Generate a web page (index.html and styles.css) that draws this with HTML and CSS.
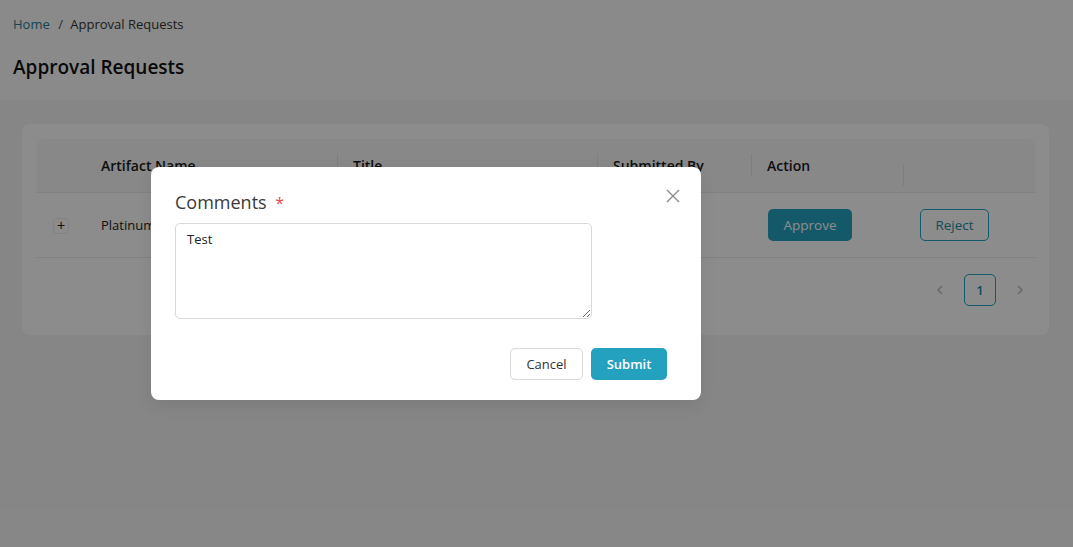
FILE: index.html
```html
<!DOCTYPE html>
<html lang="en">
<head>
  <meta charset="UTF-8">
  <meta name="viewport" content="width=device-width, initial-scale=1.0">
  <title>Approval Requests</title>
  <link rel="stylesheet" href="styles.css">
</head>
<body>
  <div class="hlavicka">
    <div class="drobky">
      <a class="drobek-odkaz" href="#">Home</a>
      <span class="oddelovac">/</span>
      <span class="drobek">Approval Requests</span>
    </div>
    <h1 class="nadpis">Approval Requests</h1>
  </div>

  <div class="obsah">
    <div class="karta">
      <div class="tabulka">
        <div class="radek radek-hlava">
          <div class="bunka bunka-plus"></div>
          <div class="bunka bunka-nazev">Artifact Name</div>
          <div class="bunka bunka-titul">Title</div>
          <div class="bunka bunka-autor">Submitted By</div>
          <div class="bunka bunka-akce">Action</div>
          <div class="bunka bunka-posledni"></div>
        </div>
        <div class="radek">
          <div class="bunka bunka-plus"><button class="rozbalit">+</button></div>
          <div class="bunka bunka-nazev">Platinum</div>
          <div class="bunka bunka-titul"></div>
          <div class="bunka bunka-autor"></div>
          <div class="bunka bunka-akce"><button class="tlacitko tlacitko-plne">Approve</button></div>
          <div class="bunka bunka-posledni"><button class="tlacitko tlacitko-obrys">Reject</button></div>
        </div>
      </div>
      <div class="strankovani">
        <span class="sipka">
          <svg width="12" height="12" viewBox="0 0 12 12"><path d="M8 2 L4 6 L8 10" fill="none" stroke="#bbb" stroke-width="1.3"/></svg>
        </span>
        <span class="stranka">1</span>
        <span class="sipka">
          <svg width="12" height="12" viewBox="0 0 12 12"><path d="M4 2 L8 6 L4 10" fill="none" stroke="#bbb" stroke-width="1.3"/></svg>
        </span>
      </div>
    </div>
  </div>

  <div class="maska"></div>

  <div class="okno">
    <button class="zavrit">
      <svg width="16" height="16" viewBox="0 0 16 16"><path d="M2 2 L14 14 M14 2 L2 14" fill="none" stroke="#8c8c8c" stroke-width="1.4"/></svg>
    </button>
    <label class="popisek">Comments <span class="hvezda">*</span></label>
    <textarea class="pole">Test</textarea>
    <div class="paticka">
      <button class="tlacitko tlacitko-zrusit">Cancel</button>
      <button class="tlacitko tlacitko-odeslat">Submit</button>
    </div>
  </div>
</body>
</html>
```

FILE: styles.css
```css
body {
  margin: 0;
  padding: 0;
  background: #f5f5f5;
  font-family: "Open Sans", "Noto Sans", sans-serif;
  color: #222;
  height: 100vh;
  overflow: hidden;
  position: relative;
}

.hlavicka {
  background: #fcfcfc;
  padding: 14px 13px 0;
  height: 86px;
}

.drobky {
  font-size: 13px;
  line-height: 20px;
  color: #333;
}

.drobek-odkaz {
  color: #217f94;
  text-decoration: none;
}

.oddelovac {
  margin: 0 4px 0 5px;
  color: #555;
}

.nadpis {
  margin: 20px 0 0;
  font-size: 19px;
  font-weight: 600;
  line-height: 26px;
  color: #111;
}

.obsah {
  padding: 24px 24px 0 22px;
}

.karta {
  background: #fff;
  border-radius: 8px;
  padding: 15px 14px 30px 15px;
  height: 166px;
}

.tabulka {
  width: 100%;
}

.radek {
  display: flex;
  height: 64px;
  align-items: center;
  border-bottom: 1px solid #ececec;
  font-size: 13px;
}

.radek-hlava {
  height: 53px;
  background: #f7f7f7;
  font-size: 14px;
  font-weight: 600;
  color: #1a1a1a;
  border-radius: 8px 8px 0 0;
}

.bunka {
  padding-left: 16px;
  box-sizing: border-box;
  position: relative;
}

.radek-hlava .bunka-titul::before,
.radek-hlava .bunka-autor::before,
.radek-hlava .bunka-akce::before,
.radek-hlava .bunka-posledni::before {
  content: "";
  position: absolute;
  left: 0;
  top: -2px;
  width: 1px;
  height: 22px;
  background: #e6e6e6;
}

.bunka-plus {
  width: 48px;
}

.bunka-nazev {
  width: 252px;
}

.bunka-titul {
  width: 260px;
}

.bunka-autor {
  width: 154px;
}

.bunka-akce {
  width: 152px;
}

.bunka-posledni {
  flex: 1;
}

.rozbalit {
  width: 16px;
  height: 16px;
  padding: 0;
  border: 1px solid #eee;
  border-radius: 4px;
  background: #fff;
  font-size: 14px;
  line-height: 13px;
  color: #222;
}

.tlacitko {
  font-family: inherit;
  font-size: 13px;
  height: 32px;
  border-radius: 5px;
  cursor: pointer;
  padding: 0;
}

.bunka-akce .tlacitko-plne {
  margin-left: 1px;
}

.tlacitko-plne {
  background: #23a3bf;
  border: none;
  color: #fff;
  width: 84px;
  font-size: 13.5px;
}

.tlacitko-obrys {
  background: #fff;
  border: 1px solid #23a3bf;
  color: #1f8aa2;
  width: 69px;
  margin-left: 1px;
  font-size: 13.5px;
}

.strankovani {
  display: flex;
  justify-content: flex-end;
  align-items: center;
  gap: 12px;
  margin-top: 16px;
  padding-right: 3px;
}

.sipka {
  width: 24px;
  display: flex;
  justify-content: center;
}

.stranka {
  width: 30px;
  height: 30px;
  border: 1px solid #23a3bf;
  border-radius: 5px;
  display: flex;
  align-items: center;
  justify-content: center;
  font-size: 13px;
  font-weight: 600;
  color: #1f8aa2;
}

.maska {
  position: absolute;
  inset: 0;
  background: rgba(0, 0, 0, 0.45);
}

.okno {
  position: absolute;
  left: 151px;
  top: 167px;
  width: 550px;
  height: 233px;
  box-sizing: border-box;
  background: #fff;
  border-radius: 8px;
  padding: 22px 24px 20px;
  box-shadow: 0 6px 16px rgba(0, 0, 0, 0.08);
}

.zavrit {
  position: absolute;
  right: 20px;
  top: 21px;
  border: none;
  background: none;
  padding: 0;
  width: 16px;
  height: 16px;
}

.popisek {
  display: block;
  font-size: 18px;
  line-height: 26px;
  color: #3a3a3a;
  font-weight: 500;
}

.hvezda {
  color: #e5484d;
  margin-left: 4px;
  font-size: 16px;
}

.pole {
  display: block;
  margin-top: 7px;
  width: 417px;
  height: 96px;
  box-sizing: border-box;
  border: 1px solid #d9d9d9;
  border-radius: 5px;
  padding: 6px 11px;
  font-family: inherit;
  font-size: 13px;
  color: #222;
  resize: vertical;
}

.paticka {
  display: flex;
  justify-content: flex-end;
  gap: 8px;
  margin-top: 29px;
  padding-right: 10px;
}

.tlacitko-zrusit {
  background: #fff;
  border: 1px solid #d9d9d9;
  color: #333;
  width: 73px;
}

.tlacitko-odeslat {
  background: #23a1bf;
  border: none;
  color: #fff;
  font-weight: 600;
  width: 76px;
}
```
